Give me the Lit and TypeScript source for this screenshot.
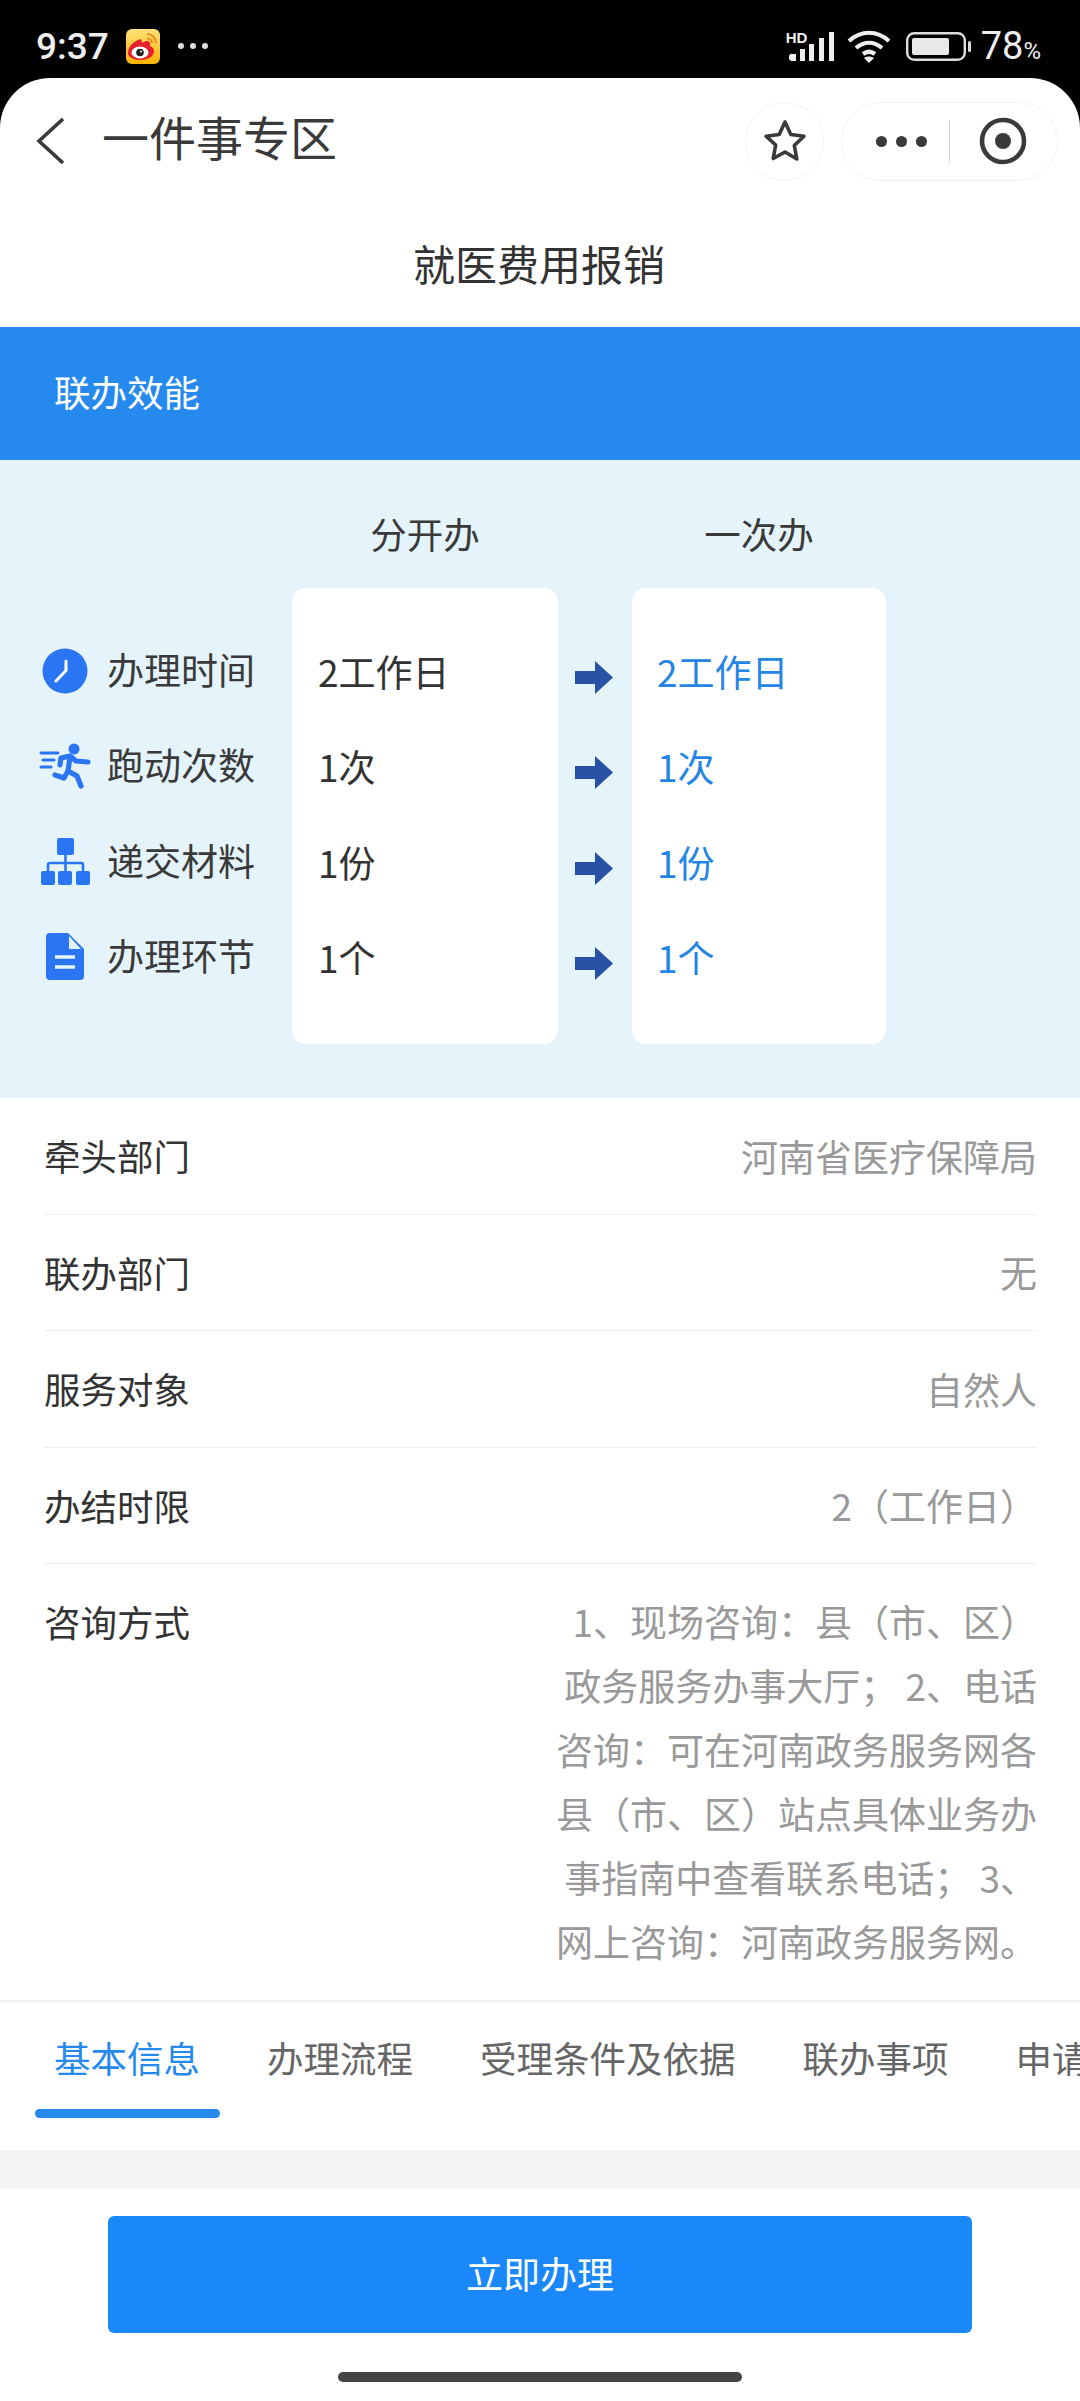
import {css, html, LitElement, svg} from 'lit';
import {customElement} from 'lit/decorators.js';

const compare = [
  {label: '办理时间', before: '2工作日', after: '2工作日'},
  {label: '跑动次数', before: '1次', after: '1次'},
  {label: '递交材料', before: '1份', after: '1份'},
  {label: '办理环节', before: '1个', after: '1个'},
];

const facts = [
  {label: '牵头部门', value: '河南省医疗保障局'},
  {label: '联办部门', value: '无'},
  {label: '服务对象', value: '自然人'},
  {label: '办结时限', value: '2（工作日）'},
];

const tabs = ['基本信息', '办理流程', '受理条件及依据', '联办事项', '申请材料'];

const rowIcons = [
  svg`<svg width="52" height="46" viewBox="0 0 52 46"><circle cx="26" cy="23" r="22.5" fill="#2a75f3"/><path d="M27 13v9.5L17 33" fill="none" stroke="#fff" stroke-width="3" stroke-linecap="round" stroke-linejoin="round"/></svg>`,
  svg`<svg width="52" height="46" viewBox="0 0 52 46"><circle cx="35" cy="6" r="5.500" fill="#2a75f3"/><g fill="none" stroke="#2a75f3" stroke-linecap="round" stroke-linejoin="round"><path d="M2 10h17M4 17h11M2 24h10" stroke-width="3"/><path d="M21 22l1-7 9-2 6 5 12 1M31 14l-2 14M29 28l-4 7-9-3M29 28l9 5 4 10" stroke-width="5.200"/></g></svg>`,
  svg`<svg width="52" height="48" viewBox="0 0 52 48"><g fill="#2a75f3"><rect x="18" y="0" width="17" height="17" rx="2"/><rect x="2" y="33" width="14" height="14" rx="2"/><rect x="19" y="33" width="14" height="14" rx="2"/><rect x="37" y="33" width="14" height="14" rx="2"/></g><path d="M26.500 17v16M9 33v-6a2 2 0 012-2h31a2 2 0 012 2v6" fill="none" stroke="#2a75f3" stroke-width="2.600"/></svg>`,
  svg`<svg width="52" height="48" viewBox="0 0 52 48"><path d="M11 0h18l16 16v27a4 4 0 01-4 4H11a4 4 0 01-4-4V4a4 4 0 014-4z" fill="#2a75f3"/><path d="M30 3l12 13H30z" fill="#e5f3fb"/><path d="M16 24h20M16 34h20" stroke="#e5f3fb" stroke-width="3.400" fill="none"/></svg>`,
];

const arrow = html`<svg width="38" height="33" viewBox="0 0 38 33"><path d="M0 10h20V0l18 16.500L20 33V23H0z" fill="#2a52a4"/></svg>`;

@customElement('app-root')
export class AppRoot extends LitElement {
  static override styles = css`
    :host {
      display: block;
      width: 1080px;
      height: 2401px;
      overflow: hidden;
      background: #000;
      font-family: "Noto Sans CJK SC", "Noto Sans", sans-serif;
      color: #333;
    }

    .status {
      height: 78px;
      display: flex;
      align-items: center;
      color: #eee;
      padding: 14px 39px 0 36px;
      box-sizing: border-box;
    }
    .time {
      font-family: Roboto, sans-serif;
      font-size: 37px;
      font-weight: 500;
      width: 90px;
    }
    .more {
      margin-left: 18px;
      display: flex;
      gap: 6px;
    }
    .more i {
      width: 6px;
      height: 6px;
      border-radius: 50%;
      background: #ddd;
    }
    .status-right {
      margin-left: auto;
      display: flex;
      align-items: center;
    }
    .signal {
      position: relative;
      width: 48px;
      height: 30px;
      margin-right: 13px;
    }
    .signal svg {
      display: block;
    }
    .hd {
      position: absolute;
      left: 0;
      top: -1px;
      font: 700 15px/15px "Liberation Sans", sans-serif;
      color: #eee;
    }
    .wifi {
      margin-right: 15px;
    }
    .battery {
      margin-right: 10px;
    }
    .pct {
      font-family: Roboto, sans-serif;
      font-size: 38px;
      line-height: 40px;
      position: relative;
      top: 2px;
    }
    .pct small {
      font-size: 24px;
    }

    .page {
      height: 2323px;
      background: #fff;
      border-radius: 50px 50px 0 0;
      display: flex;
      flex-direction: column;
      overflow: hidden;
    }

    .nav {
      height: 126px;
      flex: none;
      display: flex;
      align-items: center;
      padding: 0 22px 0 36px;
      box-sizing: border-box;
    }
    .back {
      margin-right: 38px;
    }
    .nav-title {
      font-size: 47px;
      color: #3a3a3a;
      line-height: 60px;
      margin-top: -11px;
    }
    .round {
      margin-left: auto;
      width: 79px;
      height: 79px;
      border: 1px solid #f2f2f2;
      border-radius: 50%;
      box-sizing: border-box;
      display: flex;
      align-items: center;
      justify-content: center;
    }
    .capsule {
      margin-left: 17px;
      width: 217px;
      height: 79px;
      border: 1px solid #f2f2f2;
      border-radius: 40px;
      box-sizing: border-box;
      display: flex;
      align-items: center;
    }
    .dots {
      display: flex;
      gap: 9px;
      margin-left: 34px;
      width: 73px;
    }
    .dots i {
      width: 11px;
      height: 11px;
      border-radius: 50%;
      background: #3a3a3a;
    }
    .sep {
      width: 1px;
      height: 43px;
      background: #d8d8d8;
    }
    .target {
      margin-left: 29px;
    }

    .heading {
      height: 123px;
      flex: none;
      text-align: center;
      font-size: 42px;
      line-height: 118px;
      color: #333;
      padding-right: 2px;
    }
    .band {
      height: 133px;
      flex: none;
      background: #2589ee;
      color: #fff;
      font-size: 36.500px;
      line-height: 130px;
      padding-left: 54px;
    }

    .panel {
      height: 638px;
      flex: none;
      box-sizing: border-box;
      background: #e5f3fb;
      display: grid;
      grid-template-columns: 292px 266px 74px 254px;
      grid-template-rows: 128px 456px;
    }
    .col-head {
      font-size: 36.500px;
      line-height: 148px;
      height: 128px;
      text-align: center;
      color: #3a3a3a;
    }
    .labels,
    .card,
    .arrows {
      padding-top: 38px;
      box-sizing: border-box;
    }
    .cell {
      height: 95.5px;
      display: flex;
      align-items: center;
    }
    .label {
      padding-left: 39px;
      gap: 16px;
      font-size: 37px;
      color: #3a3a3a;
      position: relative;
      top: -3px;
    }
    .label span {
      position: relative;
      top: -2px;
    }
    .label svg {
      flex: none;
    }
    .card {
      background: #fff;
      border-radius: 14px;
      padding-left: 26px;
      font-size: 37px;
      line-height: 44px;
    }
    .card.done {
      color: #2585e5;
      padding-left: 25px;
    }
    .card .cell {
      padding-bottom: 6px;
      box-sizing: border-box;
    }
    .arrows .cell {
      justify-content: center;
      padding-top: 7px;
      padding-right: 2px;
      box-sizing: border-box;
    }

    .facts {
      flex: 1;
      padding: 0 43px 0 44px;
    }
    .fact {
      display: flex;
      justify-content: space-between;
      align-items: center;
      height: 116.500px;
      box-sizing: border-box;
      border-bottom: 1px solid #eeeeee;
      font-size: 36.500px;
    }
    .fact span:last-child {
      color: #999;
      font-size: 37px;
    }
    .fact.open {
      height: auto;
      border-bottom: 0;
      align-items: flex-start;
      padding-top: 31px;
    }
    .fact .long {
      width: 484px;
      line-height: 64px;
      text-align: right;
      margin-top: -6px;
    }

    .tabs {
      height: 150px;
      flex: none;
      border-top: 3px solid #f4f4f4;
      box-sizing: border-box;
      display: flex;
      padding-left: 54px;
      gap: 67px;
      overflow: hidden;
      white-space: nowrap;
      font-size: 36.500px;
      color: #666;
      line-height: 110px;
    }
    .tab {
      position: relative;
      flex: none;
    }
    .tab.on {
      color: #2589ee;
    }
    .tab.on::after {
      content: "";
      position: absolute;
      left: -19px;
      right: -20px;
      top: 106px;
      height: 9px;
      border-radius: 5px;
      background: #2589ee;
    }
    .gray {
      height: 39px;
      flex: none;
      background: #f4f4f4;
    }
    .foot {
      flex: none;
      height: 212px;
      padding-top: 27px;
      box-sizing: border-box;
      display: flex;
      flex-direction: column;
      align-items: center;
    }
    .go {
      width: 864px;
      height: 117px;
      background: #1a88fa;
      color: #fff;
      font-size: 37px;
      line-height: 115px;
      text-align: center;
      border-radius: 6px;
    }
    .home {
      width: 404px;
      height: 10px;
      margin-top: 39px;
      border-radius: 5px;
      background: #444;
    }
  `;

  override render() {
    return html`
      <div class="status">
        <span class="time">9:37</span>
        <svg width="34" height="35" viewBox="0 0 34 35">
          <defs>
            <linearGradient id="wb" x1="0" y1="0" x2="0" y2="1">
              <stop offset="0" stop-color="#ffe27a"/>
              <stop offset="1" stop-color="#f9b400"/>
            </linearGradient>
          </defs>
          <rect width="34" height="35" rx="6" fill="url(#wb)"/>
          <path d="M15 10C7 12 2 18 2 24c0 4 5 7 12 7 9 0 14-4 14-9 0-3-2-4-4-5 1-3-1-5-3-5-2 0-4 1-5 2 0-3-1-4-1-4z" fill="#e5212d"/>
          <ellipse cx="14" cy="23.500" rx="8.500" ry="6" fill="#fff"/>
          <circle cx="14" cy="23.500" r="3.800" fill="#222"/>
          <circle cx="15" cy="22.500" r="1" fill="#fff"/>
          <path d="M21 5c5 0 9 4 9 9M21 9.500c3 0 5 2 5 4.500" fill="none" stroke="#f08a1d" stroke-width="2"/>
        </svg>
        <span class="more"><i></i><i></i><i></i></span>
        <div class="status-right">
          <div class="signal">
            <span class="hd">HD</span>
            <svg width="48" height="30" viewBox="0 0 48 30">
              <path d="M7 23h3v7H6a3 3 0 01-3-3.500 3 3 0 014-3.500zM14 18h5v12h-5zM23 13h5v17h-5zM33 7h5v23h-5zM43 1h5v29h-5z" fill="#eee"/>
            </svg>
          </div>
          <svg class="wifi" width="44" height="33" viewBox="0 0 44 33">
            <path d="M2 11c12-11 28-11 40 0M9 18c8-7 18-7 26 0M16 24c4-3 8-3 12 0" fill="none" stroke="#eee" stroke-width="4.200"/>
            <path d="M22 33l-5-5c3-2 7-2 10 0z" fill="#eee"/>
          </svg>
          <svg class="battery" width="65" height="29" viewBox="0 0 65 29">
            <rect x="1.200" y="1.200" width="57.600" height="26.600" rx="7" fill="none" stroke="#ddd" stroke-width="2.400"/>
            <rect x="6" y="6" width="37" height="17" rx="2" fill="#e8e8e8"/>
            <rect x="62" y="9" width="3" height="11" rx="1.500" fill="#ddd"/>
          </svg>
          <span class="pct">78<small>%</small></span>
        </div>
      </div>
      <div class="page">
        <div class="nav">
          <svg class="back" width="28" height="46" viewBox="0 0 28 46">
            <path d="M27 1L3 23l24 22" fill="none" stroke="#3a3a3a" stroke-width="3.600"/>
          </svg>
          <span class="nav-title">一件事专区</span>
          <div class="round">
            <svg width="46" height="46" viewBox="0 0 46 46">
              <path d="M23 4l5.800 12.500 13.200 1.700-9.700 9.300 2.500 13.500L23 34l-11.800 6.500 2.500-13.500L4 18.200l13.200-1.700z" fill="none" stroke="#3a3a3a" stroke-width="3.600" stroke-linejoin="round"/>
            </svg>
          </div>
          <div class="capsule">
            <span class="dots"><i></i><i></i><i></i></span>
            <span class="sep"></span>
            <svg class="target" width="48" height="48" viewBox="0 0 48 48">
              <circle cx="24" cy="24" r="21" fill="none" stroke="#3a3a3a" stroke-width="4.600"/>
              <circle cx="24" cy="24" r="8" fill="#3a3a3a"/>
            </svg>
          </div>
        </div>
        <div class="heading">就医费用报销</div>
        <div class="band">联办效能</div>
        <div class="panel">
          <div></div>
          <div class="col-head">分开办</div>
          <div></div>
          <div class="col-head">一次办</div>
          <div class="labels">
            ${compare.map((r, i) => html`<div class="cell label">${rowIcons[i]}<span>${r.label}</span></div>`)}
          </div>
          <div class="card">
            ${compare.map((r) => html`<div class="cell">${r.before}</div>`)}
          </div>
          <div class="arrows">
            ${compare.map(() => html`<div class="cell">${arrow}</div>`)}
          </div>
          <div class="card done">
            ${compare.map((r) => html`<div class="cell">${r.after}</div>`)}
          </div>
        </div>
        <div class="facts">
          ${facts.map((f) => html`<div class="fact"><span>${f.label}</span><span>${f.value}</span></div>`)}
          <div class="fact open">
            <span>咨询方式</span>
            <span class="long">1、现场咨询：县（市、区）政务服务办事大厅； 2、电话咨询：可在河南政务服务网各县（市、区）站点具体业务办事指南中查看联系电话； 3、网上咨询：河南政务服务网。</span>
          </div>
        </div>
        <div class="tabs">
          ${tabs.map((t, i) => html`<div class="tab ${i === 0 ? 'on' : ''}">${t}</div>`)}
        </div>
        <div class="gray"></div>
        <div class="foot">
          <div class="go">立即办理</div>
          <div class="home"></div>
        </div>
      </div>
    `;
  }
}

declare global {
  interface HTMLElementTagNameMap {
    'app-root': AppRoot;
  }
}
